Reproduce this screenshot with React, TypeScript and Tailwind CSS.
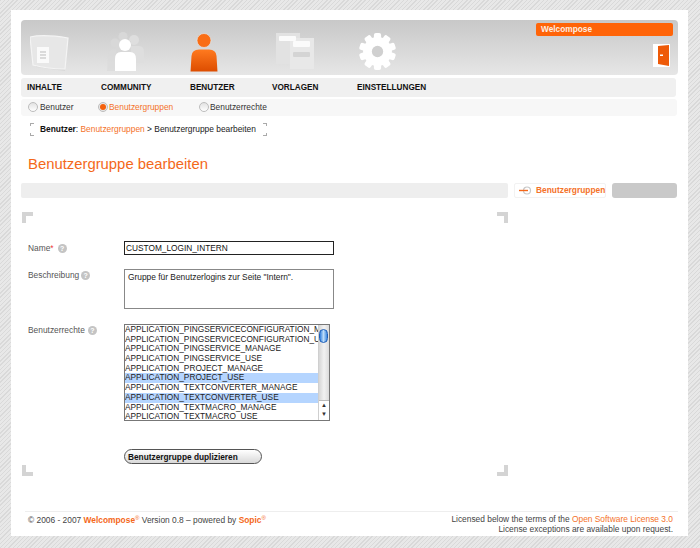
const sections = [
  { label: "INHALTE", width: "w-[74px]" },
  { label: "COMMUNITY", width: "w-[89px]" },
  { label: "BENUTZER", width: "w-[82px]" },
  { label: "VORLAGEN", width: "w-[85px]" },
  { label: "EINSTELLUNGEN", width: "w-[80px]" },
];

const rights = [
  { name: "APPLICATION_PINGSERVICECONFIGURATION_MANAGE" },
  { name: "APPLICATION_PINGSERVICECONFIGURATION_USE" },
  { name: "APPLICATION_PINGSERVICE_MANAGE" },
  { name: "APPLICATION_PINGSERVICE_USE" },
  { name: "APPLICATION_PROJECT_MANAGE" },
  { name: "APPLICATION_PROJECT_USE", selected: true },
  { name: "APPLICATION_TEXTCONVERTER_MANAGE" },
  { name: "APPLICATION_TEXTCONVERTER_USE", selected: true },
  { name: "APPLICATION_TEXTMACRO_MANAGE" },
  { name: "APPLICATION_TEXTMACRO_USE" },
];

function DocIcon() {
  return (
    <svg width="42" height="40" viewBox="0 0 42 40">
      <path d="M3 4 L38 6 L35 39 L6 35 Z" fill="#d9d9d9" />
      <path d="M0 5 Q14 2 38 6 L35 37 Q18 37 3 33 Z" fill="#e7e7e7" stroke="#f4f4f4" strokeWidth="1.2" />
      <rect x="7" y="15" width="12" height="16" fill="#fafafa" />
      <path d="M10 20h6M10 23h6M10 26h6" stroke="#bbb" strokeWidth="1" />
    </svg>
  );
}

function CommunityIcon() {
  return (
    <svg width="40" height="40" viewBox="0 0 40 40">
      <g fill="#dedede">
        <circle cx="16" cy="4.5" r="4.5" fill="#d8d8d8" />
        <circle cx="8" cy="11" r="4.5" fill="#d8d8d8" />
        <circle cx="27" cy="8" r="5" />
        <path d="M0 39 L1 24 Q2 17 8 17 L10 17 L10 39 Z" fill="#dadada" opacity="0.7" />
        <path d="M20 14 L32 14 Q37 14 37 20 L37 31 L20 31 Z" />
        <path d="M9 9 L24 9 L24 22 L9 22 Z" fill="#d8d8d8" />
      </g>
      <circle cx="18" cy="13" r="6" fill="#fff" />
      <path d="M8 39 L8 27 Q8 20 14 20 L23 20 Q29 20 29 27 L29 39 Z" fill="#fff" />
    </svg>
  );
}

function UserIcon() {
  return (
    <svg width="28" height="39" viewBox="0 0 28 39">
      <defs>
        <linearGradient id="userFill" x1="0" y1="0" x2="0" y2="1">
          <stop offset="0" stopColor="#ff7a1f" />
          <stop offset="1" stopColor="#dd4d00" />
        </linearGradient>
      </defs>
      <circle cx="14" cy="7.5" r="7" fill="#fa6d14" stroke="#e4e4e4" strokeWidth="0.7" />
      <path d="M0.5 38.5 L1.5 23 Q2 16.5 9 16.5 L19 16.5 Q26 16.5 26.5 23 L27.5 38.5 Z" fill="url(#userFill)" />
    </svg>
  );
}

function TemplateIcon() {
  return (
    <svg width="40" height="38" viewBox="0 0 40 38">
      <rect x="1" y="2" width="24" height="31" fill="#e2e2e2" />
      <rect x="15" y="7" width="24" height="31" fill="#e8e8e8" />
      <rect x="4" y="5" width="17" height="5" rx="1" fill="#fbfbfb" />
      <rect x="18" y="10" width="17" height="6" rx="1" fill="#fbfbfb" />
      <rect x="18" y="21" width="17" height="5" rx="1" fill="#d4d4d4" />
    </svg>
  );
}

function GearIcon() {
  return (
    <svg width="37" height="37" viewBox="0 0 36 36">
      <g fill="#fff">
        {[0, 36, 72, 108, 144, 180, 216, 252, 288, 324].map((a) => (
          <rect key={a} x="14.5" y="0" width="7" height="8" rx="2" transform={`rotate(${a} 18 18)`} />
        ))}
      </g>
      <circle cx="18" cy="18" r="14" fill="#fff" />
      <circle cx="18" cy="18" r="5.5" fill="#d0d0d0" />
    </svg>
  );
}

function DoorIcon() {
  return (
    <svg width="17" height="23" viewBox="0 0 17 23">
      <rect width="17" height="23" fill="#fff" />
      <path d="M5 2 L16 1 L16 22 L5 20 Z" fill="#ee5a08" />
      <rect x="7" y="10.5" width="3" height="1.5" fill="#fff" />
    </svg>
  );
}

function Help() {
  return (
    <span className="inline-flex h-[9px] w-[9px] items-center justify-center rounded-full bg-[#c4c4c4] text-[7px] leading-none font-bold text-white">
      ?
    </span>
  );
}

function Radio({ active }: { active?: boolean }) {
  return (
    <span
      className={
        active
          ? "flex h-[10px] w-[10px] items-center justify-center rounded-full border border-[#bdbdbd] bg-[#e8e8e8]"
          : "h-[10px] w-[10px] rounded-full border border-[#bdbdbd] bg-gradient-to-b from-[#e2e2e2] to-white"
      }
    >
      {active && <span className="h-[6px] w-[6px] rounded-full bg-[#f4600c]" />}
    </span>
  );
}

function Corner({ className }: { className: string }) {
  return <span className={`absolute h-[11px] w-[11px] border-[#d4d4d4] ${className}`} />;
}

function Scrollbar() {
  return (
    <div className="flex w-[11px] shrink-0 flex-col border-l border-[#cfcfcf] bg-gradient-to-r from-[#d6d6d6] via-[#f2f2f2] to-[#dcdcdc]">
      <div className="mt-[4px] h-[14px] w-[9px] rounded-[5px] border border-[#1f5fb8] bg-gradient-to-r from-[#2f7fdc] via-[#bcdcf8] to-[#3a87dd]" />
      <div className="mt-auto flex h-[20px] flex-col items-center border-t border-[#bbb] bg-white text-[6px] leading-[9px] text-[#333]">
        <span>▲</span>
        <span>▼</span>
      </div>
    </div>
  );
}

export default function App() {
  return (
    <div className="h-[548px] w-[700px] overflow-hidden bg-[#e2e2e2] bg-[repeating-linear-gradient(135deg,#d9d9d9_0px,#d9d9d9_1px,#e8e8e8_1px,#e8e8e8_3px)] pt-[10px] pl-[11px] font-['Liberation_Sans',Arial,sans-serif] text-[8.4px] text-[#333]">
      <div className="flex h-[526px] w-[677px] flex-col bg-white pt-[10px]">
        {/* header with the big section icons */}
        <div className="mr-[10px] ml-[10px] flex h-[55px] items-end rounded-[4px] bg-gradient-to-b from-[#c8c8c8] to-[#e6e6e6] pb-[3px]">
          <div className="ml-[9px] w-[77px]"><DocIcon /></div>
          <div className="w-[83px]"><CommunityIcon /></div>
          <div className="w-[85px]"><UserIcon /></div>
          <div className="mb-[3px] w-[84px]"><TemplateIcon /></div>
          <div className="mb-[2px] w-[37px]"><GearIcon /></div>
          <div className="relative ml-auto flex h-full w-[142px] flex-col items-end pt-[3px] pr-[5px]">
            <div className="w-[137px] rounded-[2px] bg-[#ff6408] px-[5px] text-[8.3px] leading-[13px] font-bold text-[#fdeee2]">
              Welcompose
            </div>
            <div className="mt-[8px] mr-[3px]"><DoorIcon /></div>
          </div>
        </div>

        {/* main navigation */}
        <div className="mt-[3px] mr-[12px] ml-[10px] flex h-[19px] items-center rounded-[3px] bg-[#f0f0f0] pt-[1px] pl-[6px] text-[8.2px] font-bold text-[#111]">
          {sections.map((s) => (
            <span key={s.label} className={s.width}>{s.label}</span>
          ))}
        </div>

        {/* sub navigation */}
        <div className="mt-[2px] mr-[11px] ml-[10px] flex h-[17px] items-center rounded-[3px] bg-[#f7f7f7] pl-[7px]">
          <div className="flex w-[70px] items-center gap-[2px]"><Radio /><span>Benutzer</span></div>
          <div className="flex w-[101px] items-center gap-[1px] text-[#f4722a]"><Radio active /><span>Benutzergruppen</span></div>
          <div className="flex items-center gap-[1px]"><Radio /><span>Benutzerrechte</span></div>
        </div>

        {/* breadcrumb */}
        <div className="relative mt-[7px] ml-[19px] flex h-[13px] w-[237px] items-center pl-[10px] whitespace-nowrap text-[#222]">
          <span className="absolute top-0 left-0 h-[3px] w-[4px] border-t border-l border-[#aaa]" />
          <span className="absolute bottom-0 left-0 h-[3px] w-[4px] border-b border-l border-[#aaa]" />
          <span className="absolute top-0 right-0 h-[3px] w-[4px] border-t border-r border-[#aaa]" />
          <span className="absolute right-0 bottom-0 h-[3px] w-[4px] border-r border-b border-[#aaa]" />
          <span className="font-bold text-[#111]">Benutzer</span>:&nbsp;
          <span className="text-[#f4722a]">Benutzergruppen</span>&nbsp;&gt; Benutzergruppe bearbeiten
        </div>

        <h1 className="mt-[19px] ml-[17px] text-[14.85px] leading-[18px] font-normal text-[#f4681a]">
          Benutzergruppe bearbeiten
        </h1>

        {/* toolbar */}
        <div className="mt-[10px] mr-[11px] ml-[10px] flex h-[15px] gap-[6px]">
          <div className="w-[487px] rounded-[2px] bg-[#eeeeee]" />
          <div className="flex w-[92px] items-center gap-[4px] rounded-[2px] border border-[#f2f2f2] pl-[4px] font-bold whitespace-nowrap text-[#f4722a]">
            <svg className="shrink-0" width="13" height="9" viewBox="0 0 13 9">
              <circle cx="8" cy="4.5" r="3.5" fill="none" stroke="#c8c8c8" strokeWidth="1.2" />
              <path d="M0 4.5h9" stroke="#f4681a" strokeWidth="1.4" />
            </svg>
            <span>Benutzergruppen</span>
          </div>
          <div className="flex-1 rounded-[3px] bg-[#c9c9c9]" />
        </div>

        {/* form */}
        <div className="relative mt-[14px] ml-[11px] h-[264px] w-[486px] pt-[29px] pl-[6px] text-[#555]">
          <Corner className="top-0 left-0 border-t-[4px] border-l-[4px]" />
          <Corner className="top-0 right-0 border-t-[4px] border-r-[4px]" />
          <Corner className="bottom-0 left-0 border-b-[4px] border-l-[4px]" />
          <Corner className="right-0 bottom-0 border-r-[4px] border-b-[4px]" />

          <div className="flex">
            <div className="flex w-[96px] items-center gap-[4px]">
              <span>Name<span className="text-[#e33]">*</span></span>
              <Help />
            </div>
            <div className="h-[14px] w-[210px] border border-[#222] pl-[1px] text-[8.3px] leading-[12px] text-[#111]">
              CUSTOM_LOGIN_INTERN
            </div>
          </div>

          <div className="mt-[14px] flex">
            <div className="flex h-[12px] w-[96px] items-center gap-[2px]">
              <span>Beschreibung</span>
              <Help />
            </div>
            <div className="h-[40px] w-[210px] border border-[#888] px-[3px] pt-[1px] leading-[12px] text-[#222]">
              Gruppe für Benutzerlogins zur Seite "Intern".
            </div>
          </div>

          <div className="mt-[15px] flex">
            <div className="flex h-[12px] w-[96px] items-center gap-[3px]">
              <span>Benutzerrechte</span>
              <Help />
            </div>
            <div className="flex h-[97px] w-[206px] border border-[#777] bg-white">
              <div className="min-w-0 flex-1 overflow-hidden text-[8.3px] leading-[9.7px] text-[#222]">
                {rights.map((r) => (
                  <div key={r.name} className={r.selected ? "h-[9.7px] bg-[#b5d5ff] whitespace-nowrap" : "h-[9.7px] whitespace-nowrap"}>
                    {r.name}
                  </div>
                ))}
              </div>
              <Scrollbar />
            </div>
          </div>

          <div className="mt-[28px] ml-[96px]">
            <button className="block h-[15px] w-[138px] rounded-[8px] border border-[#555] bg-gradient-to-b from-[#ffffff] to-[#d9d9d9] pl-[3px] text-left text-[8.3px] leading-[12px] font-bold text-[#111]">
              Benutzergruppe duplizieren
            </button>
          </div>
        </div>

        {/* footer */}
        <div className="mt-auto mr-[10px] ml-[14px] flex h-[25px] justify-between border-t border-[#eeeeee] pl-[3px] text-[#444]">
          <div className="pt-[3px] leading-[11px]">
            © 2006 - 2007 <span className="font-bold text-[#f4681a]">Welcompose</span><sup className="text-[6px] text-[#f4681a]">®</sup> Version 0.8 – powered by <span className="font-bold text-[#f4681a]">Sopic</span><sup className="text-[6px] text-[#f4681a]">®</sup>
          </div>
          <div className="pt-[2px] pr-[5px] text-right leading-[10px]">
            <div>Licensed below the terms of the <span className="text-[#f4722a]">Open Software License 3.0</span></div>
            <div>License exceptions are available upon request.</div>
          </div>
        </div>
      </div>
    </div>
  );
}
